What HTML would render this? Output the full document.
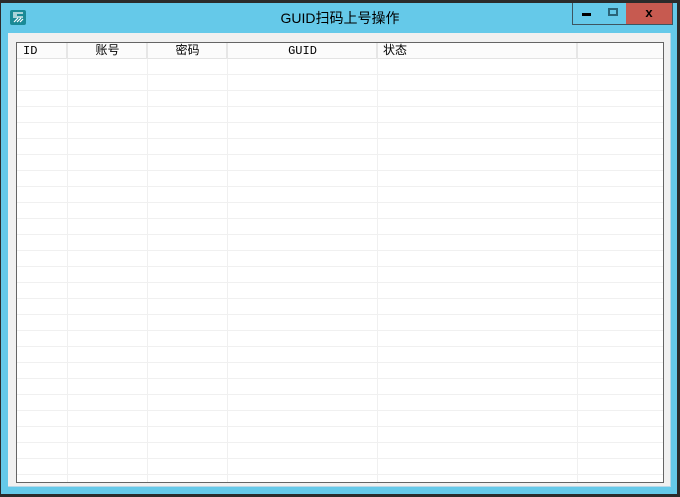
<!DOCTYPE html>
<html><head><meta charset="utf-8"><style>
*{margin:0;padding:0;box-sizing:border-box}
body{width:680px;height:497px;background:#2b2b2b;position:relative;overflow:hidden;font-family:"Liberation Sans","Noto Sans CJK SC",sans-serif}
.frame{position:absolute;left:1px;top:3px;width:676px;height:491px;background:#65c9e9}
.title{position:absolute;left:0;top:8px;width:680px;text-align:center;font-size:14px;color:#000;font-family:"Liberation Sans","Noto Sans CJK SC",sans-serif}
.client{position:absolute;left:8px;top:33px;width:663px;height:454px;background:#f0f0f0;border-right:1px solid #b8d8e8;border-bottom:1px solid #b8d8e8}
.lv{position:absolute;left:16px;top:42px;width:648px;height:441px;border:1px solid #646464;background:#fff;overflow:hidden}
.hdr{position:absolute;left:0;top:0;width:100%;height:16px;background:#fbfbfb;border-bottom:1px solid #e3e3e3}
.h{position:absolute;top:0;height:16px;font-size:12px;line-height:16px;font-family:"Liberation Mono","WenQuanYi Zen Hei",monospace;color:#000}
.vl{position:absolute;top:0;width:1px;height:100%;background:#f0f0f0}
.hv{position:absolute;top:0;width:2px;height:16px;background:#e6e6e6}
.rows{position:absolute;left:0;top:16px;width:100%;height:100%;background:repeating-linear-gradient(to bottom,transparent 0,transparent 15px,#f0f0f0 15px,#f0f0f0 16px)}
.btn{position:absolute;top:3px;height:22px;border:1px solid #3d5560;border-top:none}
</style></head><body>
<div class="frame"></div>
<svg style="position:absolute;left:10px;top:10px" width="16" height="15" viewBox="0 0 16 15"><rect x="0" y="0" width="16" height="15" rx="2" fill="#1a8a96"/><path d="M3 3h10M3 5h4M3 7h10M4 12l4-4M7 12l4-4M10 12l3-3" stroke="#fff" stroke-width="1.2" fill="none"/></svg>
<div class="title">GUID扫码上号操作</div>
<div class="btn" style="left:572px;width:29px;background:#65c9e9"><div style="position:absolute;left:9px;top:10px;width:9px;height:3px;background:#000"></div></div>
<div class="btn" style="left:600px;width:27px;background:#65c9e9;border-left:none"><div style="position:absolute;left:8px;top:5px;width:10px;height:8px;border:2px solid #2a6478"></div></div>
<div class="btn" style="left:626px;width:47px;background:#c75a50;border-left:none"><div style="position:absolute;left:0;width:100%;top:2px;text-align:center;font-weight:bold;font-size:13px;color:#000">x</div></div>
<div class="client"></div>
<div class="lv">
<div class="rows"></div>
<div class="vl" style="left:50px"></div><div class="vl" style="left:130px"></div><div class="vl" style="left:210px"></div><div class="vl" style="left:360px"></div><div class="vl" style="left:560px"></div>
<div class="hdr"></div>
<div class="hv" style="left:49px"></div><div class="hv" style="left:129px"></div><div class="hv" style="left:209px"></div><div class="hv" style="left:359px"></div><div class="hv" style="left:559px"></div>
<div class="h" style="left:6px">ID</div>
<div class="h" style="left:51px;width:79px;text-align:center">账号</div>
<div class="h" style="left:131px;width:79px;text-align:center">密码</div>
<div class="h" style="left:211px;width:149px;text-align:center">GUID</div>
<div class="h" style="left:366px">状态</div>
</div>
</body></html>
